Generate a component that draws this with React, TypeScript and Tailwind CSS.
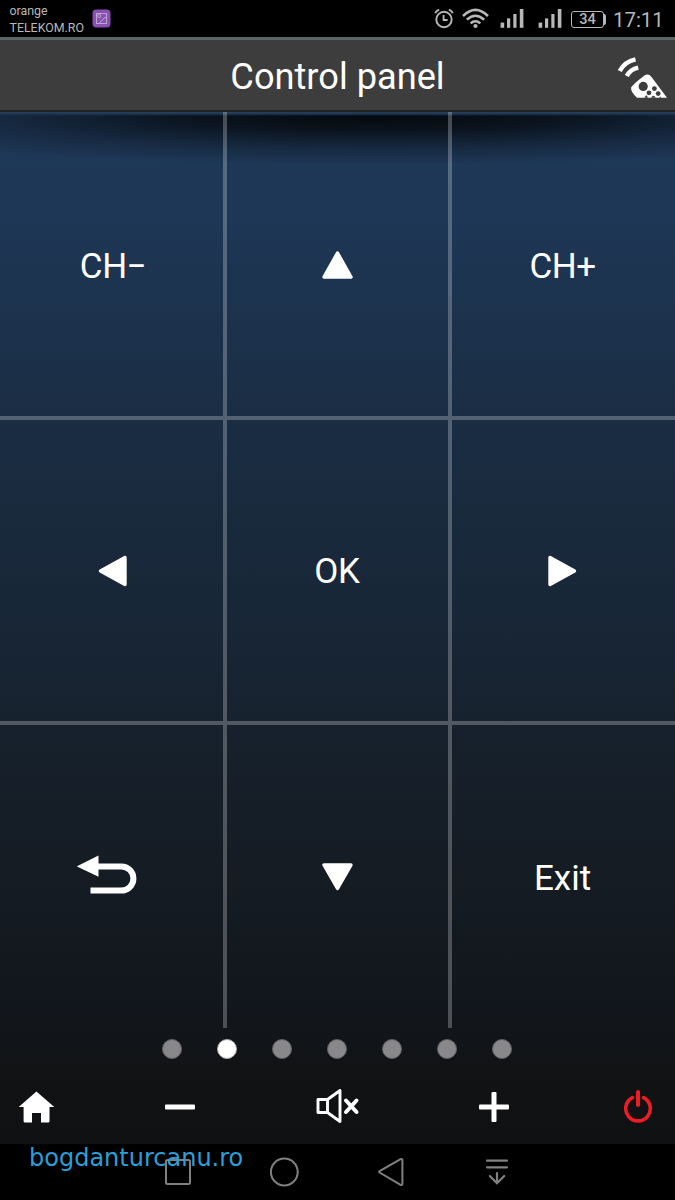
import type { ReactNode } from "react";

const PAGES = 7;
const ACTIVE_PAGE = 1;

function SignalIcon() {
  return (
    <svg className="h-5 w-6" viewBox="0 0 24 20" fill="#b8b8b8">
      <rect x="0.6" y="13.6" width="3.6" height="5.2" />
      <rect x="7" y="9.4" width="3.2" height="9.4" />
      <rect x="13.3" y="5" width="3.2" height="13.8" />
      <rect x="19.8" y="0" width="3.6" height="18.8" />
    </svg>
  );
}

function StatusBar() {
  return (
    <div className="flex h-[37px] items-start bg-black text-[#b8b8b8]">
      <div className="w-[83px] pt-[2px] pl-[9.5px] text-[12.4px] leading-[17px] whitespace-nowrap">
        <div>orange</div>
        <div>TELEKOM.RO</div>
      </div>
      <svg className="mt-[9px] ml-[9px] h-[19px] w-[19px]" viewBox="0 0 19 19">
        <rect x="0.5" y="0.5" width="18" height="18" rx="4" fill="#8a4fb3" />
        <g fill="none" stroke="#bda3cf" strokeWidth="1">
          <rect x="4.5" y="4.5" width="10" height="10" />
          <circle cx="7.2" cy="7" r="1.6" />
          <path d="M8 14Q8.4 11.6 10.4 11.4Q10.6 9 14.5 8" />
        </g>
      </svg>
      <svg className="mt-2 ml-[323px] h-[21px] w-5" viewBox="0 0 20 21" fill="none" stroke="#b8b8b8">
        <circle cx="10" cy="11.5" r="7.7" strokeWidth="1.9" />
        <path d="M9.6 7V12H13.6" strokeWidth="1.8" />
        <path d="M1.2 5.2Q2.4 2.6 5.2 1.7M18.8 5.2Q17.6 2.6 14.8 1.7" strokeWidth="1.9" />
      </svg>
      <svg className="mt-2 ml-[8px] h-[21px] w-[27px]" viewBox="0 0 27 21" fill="none" stroke="#b8b8b8" strokeWidth="2.5">
        <path d="M1 8Q13.4 -4.2 26 8" />
        <path d="M4.8 11.7Q13.4 3.8 22.2 11.7" />
        <path d="M8.6 15.4Q13.4 11.2 18.4 15.4" />
        <circle cx="13.5" cy="18" r="2.1" fill="#b8b8b8" stroke="none" />
      </svg>
      <div className="mt-[9px] ml-[11px]">
        <SignalIcon />
      </div>
      <div className="mt-[9px] ml-[14px]">
        <SignalIcon />
      </div>
      <div className="mt-[11px] ml-[9px] flex h-[17px] items-center">
        <span className="flex h-[17px] w-[33px] items-center justify-center rounded-[3px] border-[1.5px] border-[#b8b8b8] pt-px text-[14.5px] font-medium">
          34
        </span>
        <span className="h-[11px] w-[2px] rounded-r bg-[#b8b8b8]" />
      </div>
      <span className="mt-[7px] ml-[7px] text-[20.4px] leading-[26px] whitespace-nowrap">17:11</span>
    </div>
  );
}

function RemoteIcon() {
  return (
    <svg className="h-[42px] w-[50px]" viewBox="0 0 50 42">
      <g fill="none" stroke="#fff" strokeWidth="4.4">
        <path d="M2.7 14Q7.5 4.8 18.5 2.4" />
        <path d="M9.8 19Q13.3 12.3 21.2 10.6" />
      </g>
      <path
        fill="#fff"
        d="M27.5 18.5Q31.5 16 34.5 20L50 40.8H20Q13 34 14.2 30.5Q15.5 27.6 27.5 18.5Z"
      />
      <circle cx="26.2" cy="29.4" r="4.6" fill="#3d3d3d" />
      <g fill="#3d3d3d">
        <circle cx="37.4" cy="31.6" r="2.4" />
        <circle cx="32" cy="35.8" r="2.4" />
        <circle cx="41.2" cy="36.6" r="2.4" />
        <path d="M34 40.8Q36.4 36.6 38.8 40.8Z" />
        <path d="M27.4 40.8L29.2 38L31.2 40.8ZM42 40.8L43.4 39.6L44.4 40.8Z" />
      </g>
    </svg>
  );
}

function Header() {
  return (
    <div className="grid h-[75px] grid-cols-[1fr_auto_1fr] items-center border-t-[3px] border-b-2 border-t-[#5d6467] border-b-[#222] bg-[#3d3d3d]">
      <span />
      <h1 className="pt-[3px] text-[36.2px] leading-[48px] text-white">Control panel</h1>
      <div className="flex justify-end pt-[5px] pr-2">
        <RemoteIcon />
      </div>
    </div>
  );
}

function Arrow({ dir }: { dir: "up" | "down" | "left" | "right" }) {
  const d = {
    up: "M15.5 4L29 28H2Z",
    down: "M15.5 27.5L2 4H29Z",
    left: "M3.5 16L28 2.5V29.5Z",
    right: "M27.5 16L3 2.5V29.5Z",
  }[dir];
  return (
    <svg className="h-8 w-8" viewBox="0 0 32 32">
      <path d={d} fill="#fff" stroke="#fff" strokeWidth="3.4" strokeLinejoin="round" />
    </svg>
  );
}

function BackIcon() {
  return (
    <svg className="h-10 w-[62px]" viewBox="0 0 62 40">
      <path d="M-0.3 11.4L21.5 0.6V21.8Z" fill="#fff" />
      <path d="M20 11.4H44.3A12.1 12.1 0 0 1 44.3 35.6H13.5" fill="none" stroke="#fff" strokeWidth="6" />
    </svg>
  );
}

function Key({ className = "", children }: { className?: string; children: ReactNode }) {
  return (
    <button
      className={`flex items-center justify-center border-white/25 text-[35px] leading-none text-white ${className}`}
    >
      {children}
    </button>
  );
}

function KeyGrid() {
  return (
    <div className="grid h-[916px] grid-cols-[227px_225px_223px] grid-rows-[308px_305px_303px] bg-[linear-gradient(#2a4059,#1c3552_2px,transparent_4px),radial-gradient(ellipse_580px_50px_at_375px_3px,rgba(0,0,0,.85),rgba(0,0,0,.65)_32%,rgba(0,0,0,.28)_65%,transparent)]">
      <Key className="border-r-4 border-b-4 pt-1 pl-[3px]">
        <span className="tracking-[-0.5px]">CH−</span>
      </Key>
      <Key className="border-r-4 border-b-4 pt-0.5">
        <Arrow dir="up" />
      </Key>
      <Key className="border-b-4 pt-1 pr-[2px]">
        <span className="tracking-[-0.5px]">CH+</span>
      </Key>
      <Key className="border-r-4 border-b-4 pl-[2px]">
        <Arrow dir="left" />
      </Key>
      <Key className="border-r-4 border-b-4 pt-[2px] pr-px">
        <span className="tracking-[-0.3px]">OK</span>
      </Key>
      <Key className="border-b-4 pr-[2px]">
        <Arrow dir="right" />
      </Key>
      <Key className="border-r-4 pr-[7px] pb-1">
        <BackIcon />
      </Key>
      <Key className="border-r-4">
        <Arrow dir="down" />
      </Key>
      <Key className="pt-[3px] pr-[2px]">Exit</Key>
    </div>
  );
}

function PageDots() {
  return (
    <div className="flex h-[41px] items-center justify-center gap-[35px] pr-px">
      {Array.from({ length: PAGES }, (_, i) => (
        <span
          key={i}
          className={`h-5 w-5 rounded-full border ${
            i === ACTIVE_PAGE ? "border-[#aaa] bg-white" : "border-[#606164] bg-[#88888a]"
          }`}
        />
      ))}
    </div>
  );
}

function Toolbar() {
  return (
    <div className="flex h-[75px] items-center pl-[18px]">
      <svg className="h-9 w-[37px]" viewBox="0 0 37 36" fill="#fff">
        <path d="M18.4 2.5L36.3 18H31.5V32.2Q31.5 33.5 30.2 33.5H23V24H14V33.5H7Q5.6 33.5 5.6 32.2V18H0.7Z" />
      </svg>
      <svg className="ml-[108.5px] h-9 w-8" viewBox="0 0 32 36">
        <rect x="1" y="15.6" width="30" height="5" rx="1" fill="#fff" />
      </svg>
      <svg className="ml-[120px] h-9 w-11" viewBox="0 0 44 36" fill="none" stroke="#fff" strokeLinejoin="round">
        <path d="M2 10.5H11.5V23.5H2ZM11.5 10.5L24 1.5V32.5L11.5 23.5" strokeWidth="2.9" />
        <path d="M30 11.5L40.5 23M40.5 11.5L30 23" strokeWidth="4" strokeLinecap="round" />
      </svg>
      <svg className="ml-[118.5px] h-9 w-8" viewBox="0 0 32 36" fill="#fff">
        <rect x="1" y="15.6" width="30" height="5" rx="1" />
        <rect x="13.5" y="3" width="5" height="30" rx="1" />
      </svg>
      <svg className="ml-[113px] h-9 w-[30px]" viewBox="0 0 30 36" fill="none" stroke="#ee1c23" strokeWidth="3.6" strokeLinecap="round">
        <path d="M9.4 8.6A12.3 12.3 0 1 0 20.6 8.6" />
        <path d="M15 3V16" strokeWidth="4" />
      </svg>
    </div>
  );
}

function NavBar() {
  return (
    <div className="relative flex h-[56px] items-center bg-black">
      <svg className="ml-[164px] h-7 w-7" viewBox="0 0 28 28" fill="none" stroke="#808080" strokeWidth="2">
        <rect x="2" y="2" width="24" height="24" rx="1.5" />
      </svg>
      <svg className="ml-[77px] h-[30px] w-[30px]" viewBox="0 0 30 30" fill="none" stroke="#808080" strokeWidth="2">
        <circle cx="15.3" cy="15" r="13.4" />
      </svg>
      <svg className="ml-[77px] h-[30px] w-7" viewBox="0 0 28 30" fill="none" stroke="#808080" strokeWidth="2" strokeLinejoin="round">
        <path d="M3.6 14.1Q2.6 14.8 3.6 15.5L24.6 27.9Q26.4 28.6 26.4 26.8V3.2Q26.4 1.4 24.6 2.1Z" />
      </svg>
      <svg className="ml-[81px] h-7 w-6" viewBox="0 0 24 28" fill="none" stroke="#808080" strokeWidth="2.2" strokeLinecap="round">
        <path d="M2 2.7H22M2 9.3H22" />
        <path d="M12 15V25M4.8 18L12 25.3L19.2 18" />
      </svg>
      <span className="absolute top-0 left-[29px] font-['DejaVu_Sans'] text-[24px] leading-[28px] text-[#2a9fd8]">
        bogdanturcanu.ro
      </span>
    </div>
  );
}

export default function App() {
  return (
    <div className="h-[1200px] w-[675px] overflow-hidden bg-black font-[Roboto,sans-serif]">
      <StatusBar />
      <Header />
      <main className="h-[1032px] bg-[linear-gradient(#1e3858,#1e3756_10%,#1a2d43_30%,#182636_50%,#161f29_65%,#12161b_88%,#111213_94%,#101112)]">
        <KeyGrid />
        <PageDots />
        <Toolbar />
      </main>
      <NavBar />
    </div>
  );
}
